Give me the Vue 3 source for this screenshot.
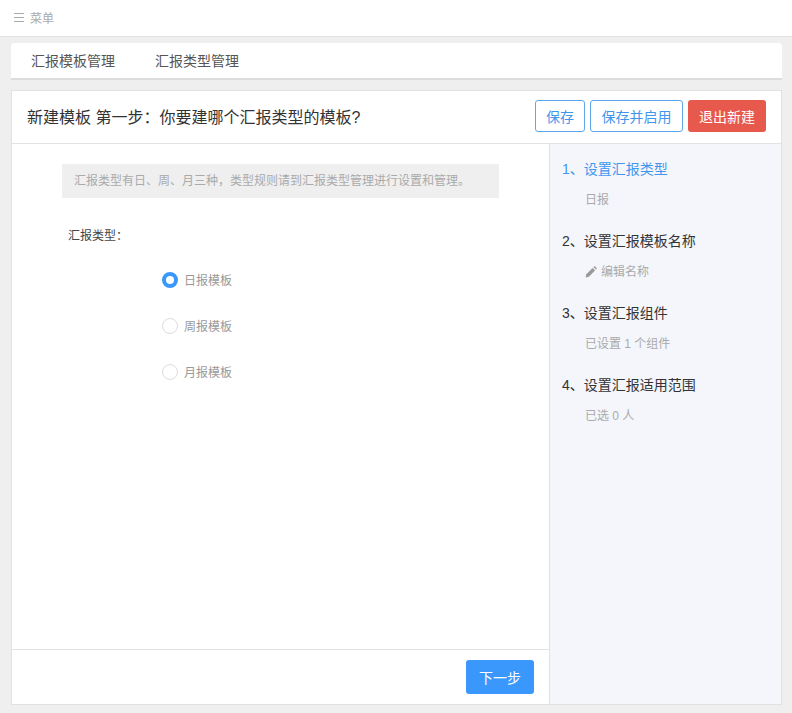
<script setup>
const steps = [
  { title: '1、设置汇报类型', desc: '日报', active: true },
  { title: '2、设置汇报模板名称', desc: '编辑名称', edit: true },
  { title: '3、设置汇报组件', desc: '已设置 1 个组件' },
  { title: '4、设置汇报适用范围', desc: '已选 0 人' }
]
const types = [
  { label: '日报模板', checked: true },
  { label: '周报模板' },
  { label: '月报模板' }
]
</script>

<template>
  <div class="page">
    <header class="topbar">
      <span class="burger"><i></i><i></i><i></i></span>
      <span>菜单</span>
    </header>

    <div class="content">
      <nav class="tabs">
        <span>汇报模板管理</span>
        <span>汇报类型管理</span>
      </nav>

      <section class="panel">
        <div class="panel-head">
          <h1>新建模板 第一步：你要建哪个汇报类型的模板?</h1>
          <div class="actions">
            <button class="btn btn-line">保存</button>
            <button class="btn btn-line wide">保存并启用</button>
            <button class="btn btn-red">退出新建</button>
          </div>
        </div>

        <div class="panel-body">
          <div class="main">
            <div class="form">
              <p class="notice">汇报类型有日、周、月三种，类型规则请到汇报类型管理进行设置和管理。</p>
              <p class="field-label">汇报类型：</p>
              <div class="radios">
                <label v-for="t in types" :key="t.label" class="radio">
                  <span class="dot" :class="{ checked: t.checked }"></span>
                  {{ t.label }}
                </label>
              </div>
            </div>
            <div class="footer">
              <button class="btn btn-blue">下一步</button>
            </div>
          </div>

          <aside class="side">
            <div v-for="s in steps" :key="s.title" class="step">
              <div class="step-title" :class="{ active: s.active }">{{ s.title }}</div>
              <div class="step-desc">
                <svg v-if="s.edit" class="pen" viewBox="0 0 12 12">
                  <path d="M.6 11.4l.7-3.2L7.6 1.9l2.5 2.5-6.3 6.3z" fill="#999" />
                  <path d="M8.4 1.1l.6-.6a.8.8 0 0 1 1.1 0l1.4 1.4a.8.8 0 0 1 0 1.1l-.6.6z" fill="#999" />
                </svg>
                {{ s.desc }}
              </div>
            </div>
          </aside>
        </div>
      </section>
    </div>
  </div>
</template>

<style scoped>
.page {
  width: 792px;
  height: 713px;
  background: #efefef;
  font-family: "Liberation Sans", "Noto Sans CJK SC", sans-serif;
  display: flex;
  flex-direction: column;
  overflow: hidden;
}

.topbar {
  height: 34px;
  padding: 0 0 2px 14px;
  background: #fff;
  border-bottom: 1px solid #e2e2e2;
  display: flex;
  align-items: center;
  gap: 6px;
  font-size: 12px;
  color: #aaa;
  flex-shrink: 0;
}

.burger {
  width: 10px;
  display: flex;
  flex-direction: column;
  gap: 3px;
}

.burger i {
  display: block;
  height: 1px;
  background: #aaa;
}

.content {
  flex: 1;
  min-height: 0;
  padding: 6px 10px 8px 11px;
  display: flex;
  flex-direction: column;
  gap: 10px;
}

.tabs {
  height: 33px;
  padding: 0 0 2px 20px;
  background: #fff;
  border-bottom: 2px solid #dcdcdc;
  border-radius: 4px 4px 0 0;
  display: flex;
  align-items: center;
  gap: 40px;
  font-size: 14px;
  color: #555;
  flex-shrink: 0;
}

.panel {
  flex: 1;
  min-height: 0;
  background: #fff;
  border: 1px solid #e2e2e2;
  display: flex;
  flex-direction: column;
}

.panel-head {
  height: 50px;
  border-bottom: 1px solid #e2e2e2;
  display: flex;
  align-items: center;
  justify-content: space-between;
  padding: 0 15px 2px;
  flex-shrink: 0;
}

h1 {
  margin: 0;
  font-size: 16px;
  font-weight: 400;
  color: #333;
}

.actions {
  display: flex;
  gap: 5px;
}

.btn {
  height: 32px;
  border-radius: 3px;
  font-family: inherit;
  font-size: 14px;
  padding: 0;
  border: 1px solid transparent;
}

.btn-line {
  background: #fff;
  border-color: #5fa8ee;
  color: #3f96ec;
  padding: 0 10px;
}

.btn-line.wide {
  width: 93px;
  padding: 0;
}

.btn-red {
  background: #e8594d;
  color: #fff;
  width: 78px;
}

.btn-blue {
  background: #3a97fb;
  color: #fff;
  width: 68px;
  height: 34px;
}

.panel-body {
  flex: 1;
  min-height: 0;
  display: flex;
}

.main {
  flex: 1;
  display: flex;
  flex-direction: column;
  min-width: 0;
}

.form {
  flex: 1;
  padding: 20px 50px;
}

.notice {
  margin: 0;
  width: 437px;
  height: 34px;
  line-height: 34px;
  padding-left: 12px;
  box-sizing: border-box;
  background: #efefef;
  font-size: 12px;
  color: #aaa;
  white-space: nowrap;
}

.field-label {
  margin: 29px 0 0 6px;
  font-size: 12px;
  line-height: 18px;
  color: #444;
}

.radios {
  margin: 25px 0 0 100px;
  display: flex;
  flex-direction: column;
  gap: 28px;
}

.radio {
  display: flex;
  align-items: center;
  gap: 6px;
  height: 18px;
  font-size: 12px;
  color: #999;
}

.dot {
  width: 16px;
  height: 16px;
  margin-top: 2px;
  box-sizing: border-box;
  border-radius: 50%;
  border: 1px solid #ddd;
  background: #fff;
}

.dot.checked {
  border: 4px solid #3a97fb;
}

.footer {
  height: 54px;
  border-top: 1px solid #e2e2e2;
  display: flex;
  align-items: center;
  justify-content: flex-end;
  padding-right: 15px;
  flex-shrink: 0;
}

.side {
  width: 232px;
  flex-shrink: 0;
  background: #f4f6fb;
  border-left: 1px solid #e2e2e2;
  padding: 15px 12px;
  box-sizing: border-box;
}

.step {
  height: 72px;
}

.step-title {
  font-size: 14px;
  line-height: 20px;
  color: #333;
}

.step-title.active {
  color: #3f96ec;
}

.step-desc {
  margin: 12px 0 0 23px;
  font-size: 12px;
  line-height: 18px;
  color: #aaa;
  display: flex;
  align-items: center;
  gap: 4px;
}

.pen {
  width: 12px;
  height: 12px;
}
</style>
